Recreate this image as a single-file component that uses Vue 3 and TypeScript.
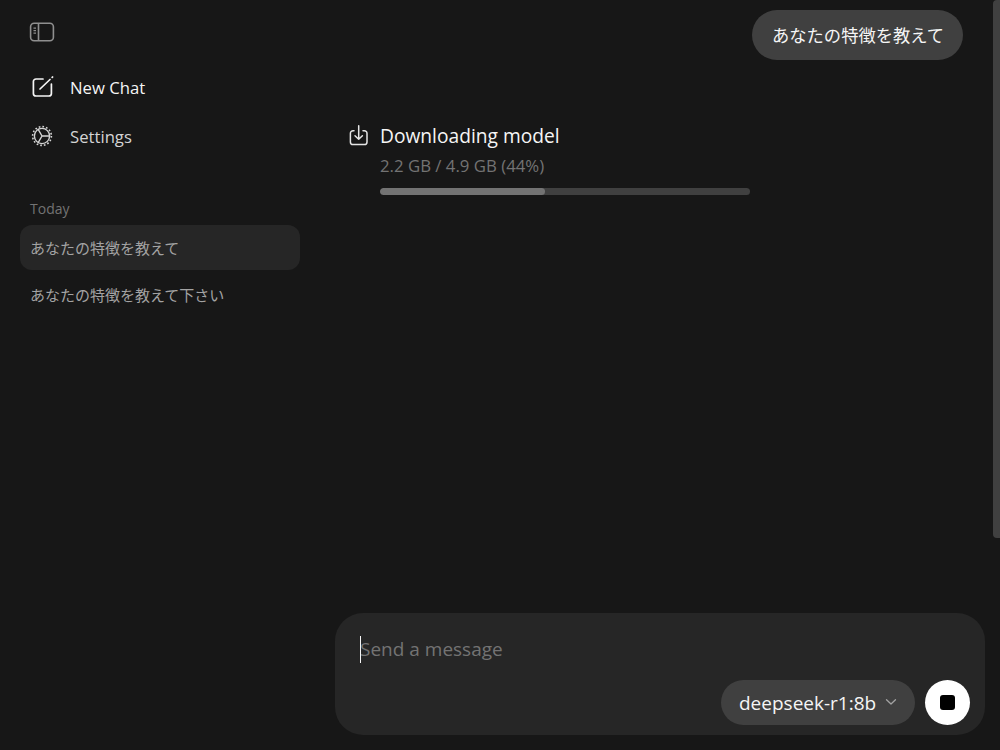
<script setup lang="ts">
const chats = [
  { title: 'あなたの特徴を教えて', active: true },
  { title: 'あなたの特徴を教えて下さい', active: false },
]
const progress = 44.6
</script>

<template>
  <div class="app">
    <aside class="sidebar">
      <button class="toggle" aria-label="Toggle sidebar">
        <svg width="26" height="20" viewBox="0 0 26 20" fill="none" stroke="#8f8f8f" stroke-width="1.6">
          <rect x="1.6" y="1.2" width="22.8" height="17.6" rx="3.5" />
          <path d="M9.5 1.2v17.6" />
          <path d="M4.5 6.2h2.5M4.5 8.7h2.5M4.5 11.2h2.5" stroke-width="1.2" />
        </svg>
      </button>
      <nav class="nav">
        <div class="nav-item primary">
          <svg width="24" height="24" viewBox="0 0 24 24" fill="none" stroke="#f5f5f5" stroke-width="1.7" stroke-linecap="round">
            <path d="M13 3H6a2.6 2.6 0 0 0-2.6 2.6v11.8A2.6 2.6 0 0 0 6 20h12.8a2.6 2.6 0 0 0 2.6-2.6V8" />
            <path d="M10 13 20 3.5" />
            <path d="M22.2 1.4l.4-.4" />
          </svg>
          <span class="nav-label">New Chat</span>
        </div>
        <div class="nav-item">
          <svg width="24" height="24" viewBox="0 0 24 24" fill="none" stroke="#d4d4d4" stroke-linecap="round">
            <circle cx="12" cy="12" r="7.6" stroke-width="1.4" />
            <path d="M12 12h7.6M12 12 8.2 5.4M12 12l-3.8 6.6" stroke-width="1.4" />
            <circle cx="12" cy="12" r="9.4" stroke-width="1.6" stroke-linecap="butt" stroke-dasharray="1.7 2" />
          </svg>
          <span>Settings</span>
        </div>
      </nav>
      <div class="section-label">Today</div>
      <div class="chat-list">
        <div v-for="chat in chats" :key="chat.title" class="chat" :class="{ active: chat.active }">{{ chat.title }}</div>
      </div>
    </aside>

    <main class="main">
      <div class="messages">
        <div class="bubble-row">
          <div class="bubble">あなたの特徴を教えて</div>
        </div>
        <div class="download">
          <svg class="download-icon" width="20" height="22" viewBox="0 0 20 22" fill="none" stroke="#e5e5e5" stroke-width="1.5" stroke-linecap="round" stroke-linejoin="round">
            <path d="M6 5.8H5A2.6 2.6 0 0 0 2.4 8.4v8.5A2.6 2.6 0 0 0 5 19.5h11.4a2.6 2.6 0 0 0 2.6-2.6V8.4a2.6 2.6 0 0 0-2.6-2.6H15" />
            <path d="M10.7.8v13.4M7 10.8l3.7 3.5 3.7-3.5" />
          </svg>
          <div class="download-body">
            <div class="download-title">Downloading model</div>
            <div class="download-meta">2.2 GB / 4.9 GB (44%)</div>
            <div class="track"><div class="fill" :style="{ width: progress + '%' }"></div></div>
          </div>
        </div>
      </div>

      <div class="composer">
        <div class="input-line"><span class="caret"></span><span class="placeholder">Send a message</span></div>
        <div class="controls">
          <div class="model">
            <span>deepseek-r1:8b</span>
            <svg width="12" height="8" viewBox="0 0 12 8" fill="none" stroke="#a3a3a3" stroke-width="1.3" stroke-linecap="round" stroke-linejoin="round"><path d="M1.5 1.8 6 6l4.5-4.2" /></svg>
          </div>
          <button class="stop" aria-label="Stop"><span class="stop-square"></span></button>
        </div>
      </div>
    </main>
    <div class="scrollbar"></div>
  </div>
</template>

<style>
html, body { margin: 0; background: #171717; }
</style>

<style scoped>
.app {
  position: relative;
  display: flex;
  width: 1000px;
  height: 750px;
  overflow: hidden;
  background: #171717;
  color: #f5f5f5;
  font-family: "Open Sans", "Noto Sans", "Noto Sans CJK JP", sans-serif;
}
.sidebar {
  width: 320px;
  flex: none;
  box-sizing: border-box;
  padding: 22px 20px 0;
  display: flex;
  flex-direction: column;
}
.toggle {
  width: 26px;
  height: 20px;
  margin-left: 9px;
  padding: 0;
  border: 0;
  background: none;
  display: block;
}
.nav { margin-top: 22px; display: flex; flex-direction: column; }
.nav-item {
  height: 48px;
  display: flex;
  align-items: center;
  gap: 16px;
  padding-left: 10px;
  font-size: 16.7px;
  color: #d4d4d4;
}
.nav-item.primary { color: #f5f5f5; }
.nav-label { margin-top: -2px; }
.section-label {
  margin-top: 39px;
  padding-left: 10px;
  font-size: 14px;
  line-height: 20px;
  color: #737373;
}
.chat-list { margin-top: 6px; display: flex; flex-direction: column; gap: 2px; }
.chat {
  height: 45px;
  line-height: 45px;
  padding-left: 10px;
  border-radius: 12px;
  font-size: 15px;
  color: #a3a3a3;
  font-family: "Noto Sans CJK JP", sans-serif;
}
.chat.active { background: #262626; }
.main {
  flex: 1;
  min-width: 0;
  display: flex;
  flex-direction: column;
  padding: 10px 15px 15px;
  box-sizing: border-box;
}
.messages { flex: 1; min-height: 0; }
.bubble-row { display: flex; justify-content: flex-end; padding-right: 22px; }
.bubble {
  width: 211px;
  box-sizing: border-box;
  height: 50px;
  line-height: 50px;
  padding-left: 20px;
  border-radius: 25px;
  background: #404040;
  font-size: 17.3px;
  white-space: nowrap;
  font-family: "Noto Sans CJK JP", sans-serif;
  color: #f5f5f5;
}
.download { display: flex; gap: 12px; margin-top: 64px; padding-left: 13px; }
.download-icon { margin-top: 1px; flex: none; }
.download-body { width: 370px; }
.download-title { font-size: 19.2px; line-height: 24px; color: #f5f5f5; }
.download-meta { margin-top: 7px; font-size: 16.8px; line-height: 22px; color: #737373; }
.track { margin-top: 11px; height: 7px; border-radius: 4px; background: #404040; overflow: hidden; }
.fill { height: 100%; border-radius: 4px; background: #737373; }
.composer {
  height: 122px;
  box-sizing: border-box;
  border-radius: 28px;
  background: #262626;
  padding: 23px 15px 10px 25px;
  display: flex;
  flex-direction: column;
  justify-content: space-between;
}
.input-line { position: relative; height: 26px; display: flex; align-items: center; }
.caret { position: absolute; left: 0; top: 0; width: 1px; height: 27px; background: #f5f5f5; }
.placeholder { font-size: 19px; color: #737373; }
.controls { display: flex; justify-content: flex-end; gap: 10px; }
.model {
  height: 45px;
  width: 194px;
  box-sizing: border-box;
  padding-left: 18px;
  border-radius: 23px;
  background: #404040;
  display: flex;
  align-items: center;
  gap: 9px;
  font-size: 19px;
  color: #f5f5f5;
}
.model svg { margin-top: -2px; }
.stop {
  width: 45px;
  height: 45px;
  padding: 0;
  border: 0;
  border-radius: 50%;
  background: #fff;
  display: flex;
  align-items: center;
  justify-content: center;
}
.stop-square { width: 15px; height: 15px; border-radius: 3px; background: #000; }
.scrollbar {
  position: absolute;
  right: 0;
  top: 0;
  width: 7px;
  height: 538px;
  border-radius: 4px 0 0 4px;
  background: #404040;
}
</style>
